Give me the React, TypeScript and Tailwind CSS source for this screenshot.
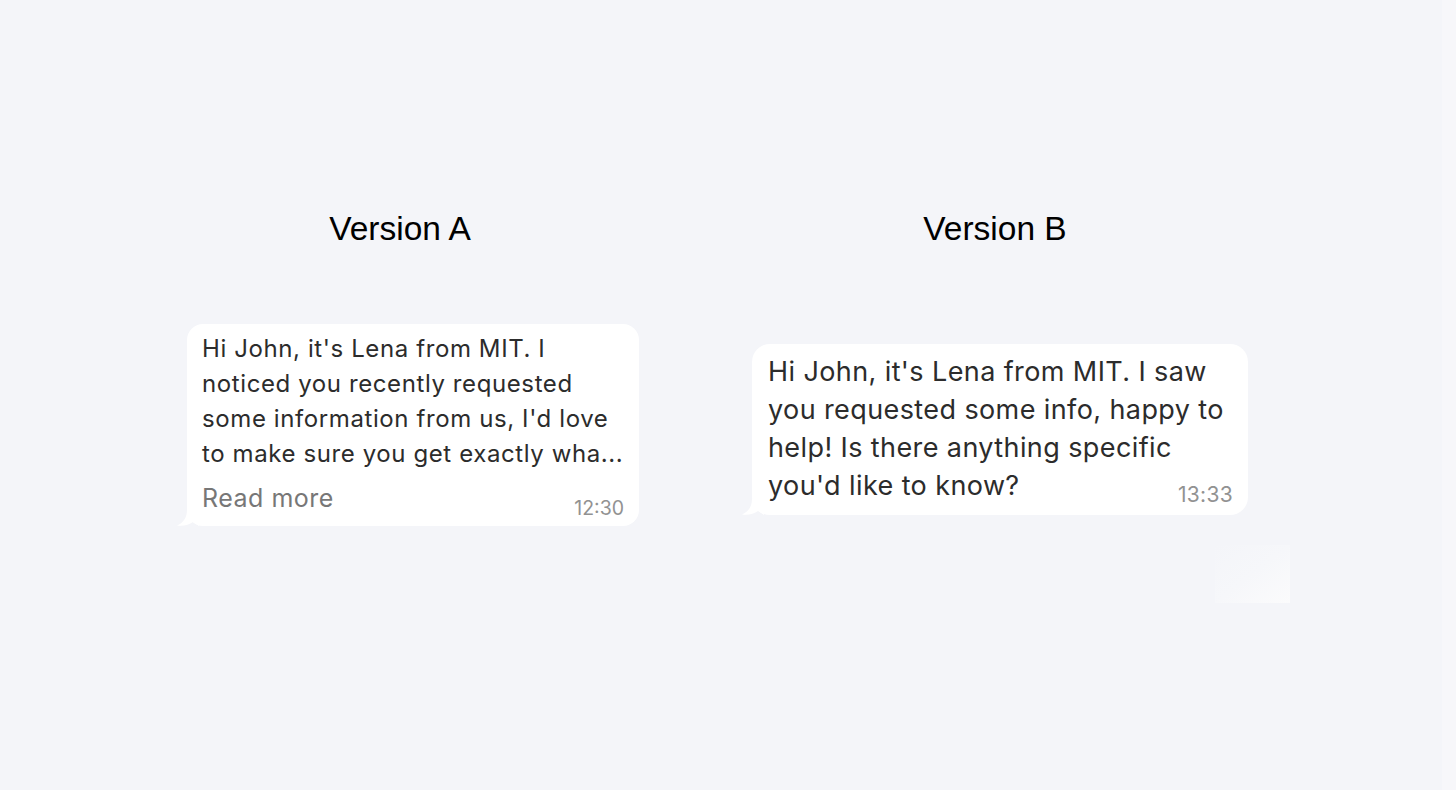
import React from 'react';

function Tail() {
  return (
    <svg
      className="absolute -left-[10px] bottom-0 h-[16px] w-[22px]"
      viewBox="0 0 22 16"
      fill="none"
    >
      <path d="M10 0 C10 8 6 13 0 15.5 C6 16.5 12 15 16 12 L22 16 L22 0 Z" fill="#ffffff" />
    </svg>
  );
}

const bubbleFont = { fontFamily: 'Inter, "Liberation Sans", sans-serif' };
const titleFont = { fontFamily: '"Liberation Sans", Arial, sans-serif' };

function BubbleA() {
  return (
    <div className="relative ml-[37px] mt-[75px] w-[452px] rounded-[16px] bg-white pl-[15px] pr-[15px] pt-[7px] pb-[10px]">
      <Tail />
      <div className="relative text-[24px] leading-[35px] tracking-[0.6px] text-[#2c2c2c] whitespace-nowrap" style={bubbleFont}>
        <div>Hi John, it's Lena from MIT. I</div>
        <div>noticed you recently requested</div>
        <div>some information from us, I'd love</div>
        <div>to make sure you get exactly wha...</div>
      </div>
      <div className="relative mt-[10px] flex items-end justify-between" style={bubbleFont}>
        <span className="text-[25px] leading-[35px] tracking-[0.5px] text-[#777777]">Read more</span>
        <span className="mb-[-4px] text-[19.5px] leading-[24px] text-[#929292]">12:30</span>
      </div>
    </div>
  );
}

function BubbleB() {
  return (
    <div className="relative ml-[7px] mt-[95px] w-[496px] rounded-[18px] bg-white pl-[16px] pr-[15px] pt-[9px] pb-[10px]">
      <Tail />
      <div className="relative grid" style={bubbleFont}>
        <div className="col-start-1 row-start-1 text-[27px] leading-[38px] tracking-[0.4px] text-[#2c2c2c] whitespace-nowrap">
          <div>Hi John, it's Lena from MIT. I saw</div>
          <div>you requested some info, happy to</div>
          <div>help! Is there anything specific</div>
          <div>you'd like to know?</div>
        </div>
        <span className="col-start-1 row-start-1 mb-[-3px] self-end justify-self-end text-[21px] leading-[26px] tracking-[0.3px] text-[#929292]">13:33</span>
      </div>
    </div>
  );
}

export default function App() {
  return (
    <div className="relative h-[790px] w-[1456px] overflow-hidden bg-[#f4f5f9]">
      <div className="flex gap-[95px] pl-[150px] pt-[209px]">
        <div className="flex w-[500px] flex-col">
          <div className="text-center text-[33.5px] leading-[40px] text-black" style={titleFont}>
            Version A
          </div>
          <BubbleA />
        </div>
        <div className="flex w-[500px] flex-col">
          <div className="text-center text-[33.5px] leading-[40px] text-black" style={titleFont}>
            Version B
          </div>
          <BubbleB />
        </div>
      </div>
      {/* faint artefacts of the source image */}
      <div className="absolute left-[1215px] top-[545px] h-[58px] w-[75px] bg-gradient-to-tl from-[#fbfbfc] via-[#f6f7fa] to-transparent" />
      <div className="absolute right-0 top-0 h-full w-[14px] bg-[#f7f7fa]" />
    </div>
  );
}
